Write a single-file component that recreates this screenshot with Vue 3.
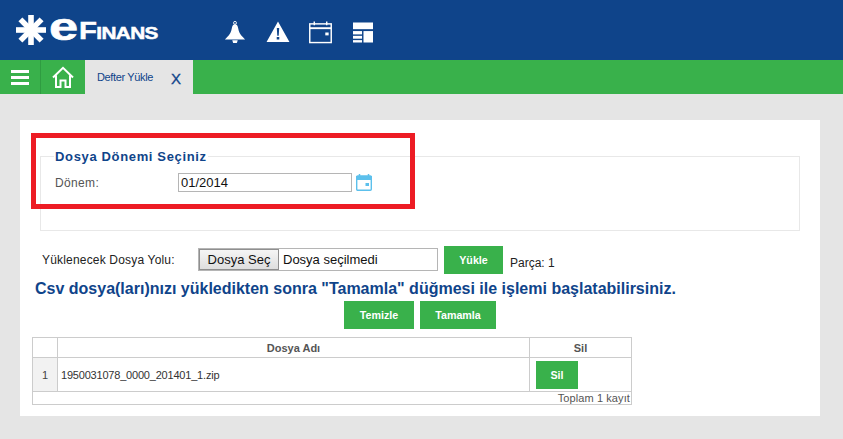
<template>
  <div class="page">
    <header class="topbar">
      <div class="logo">
        <svg class="logo-mark" viewBox="0 0 30 30" width="30" height="30">
          <g fill="#fff">
            <rect v-for="a in spokes" :key="a" x="12.2" y="0" width="5.6" height="30" :transform="`rotate(${a} 15 15)`" />
          </g>
        </svg>
        <span class="logo-e">e</span><span class="logo-name">Finans</span>
      </div>
      <div class="top-icons">
        <svg viewBox="0 0 24 26" width="22" height="25" fill="#fff">
          <circle cx="12" cy="2.5" r="1.6" fill="none" stroke="#fff" stroke-width="1" />
          <path d="M12 4c2 0 3 1.500 3.400 4 .6 4 2 7 5.600 10.500L23 20.500H1l2-2C6.600 15 8 12 8.600 8 9 5.500 10 4 12 4z" />
          <path d="M9 21.500h6l-1 3h-4z" />
        </svg>
        <svg viewBox="0 0 26 24" width="24" height="22" fill="#fff">
          <path fill-rule="evenodd" d="M13 .5 25.500 23H.5zM11.700 7.500l.5 8.500h1.600l.5-8.500zM11.600 17.500v2.800h2.800v-2.800z" />
        </svg>
        <svg class="cal-top" viewBox="0 0 24 24" width="23" height="23" fill="none" stroke="#fff" stroke-width="1.500">
          <rect x=".8" y="3" width="22.400" height="19.500" />
          <path d="M.8 7.500h22.400" stroke-width="2" />
          <path d="M5.500 .5v4M18.500 .5v4" />
          <rect x="17" y="12" width="3.500" height="3" fill="#fff" stroke="none" />
        </svg>
        <svg viewBox="0 0 21 21" width="20" height="21" fill="#fff">
          <rect x="0" y="0" width="21" height="7" />
          <rect x="0" y="9" width="9.500" height="3.500" />
          <rect x="0" y="14" width="9.500" height="3" />
          <rect x="0" y="18.500" width="9.500" height="2.500" />
          <rect x="11" y="9" width="10" height="12" />
        </svg>
      </div>
    </header>

    <nav class="tabbar">
      <button class="bar-btn menu-btn" type="button">
        <span></span><span></span><span></span>
      </button>
      <button class="bar-btn home-btn" type="button">
        <svg viewBox="0 0 22 22" width="22" height="23" fill="none" stroke="#fff" stroke-width="2">
          <path d="M1 11 11 1.300 21 11M4 9v11.500h4.500V14h5v6.500H18V9" />
        </svg>
      </button>
      <div class="tab">
        <span class="tab-title">Defter Yükle</span>
        <span class="tab-close">X</span>
      </div>
    </nav>

    <main class="content">
      <section class="card">
        <div class="highlight"></div>

        <fieldset class="period">
          <legend>Dosya Dönemi Seçiniz</legend>
          <div class="period-row">
            <label class="period-label">Dönem:</label>
            <input class="period-input" type="text" value="01/2014" />
            <svg class="cal" viewBox="0 0 16 17" width="16" height="17">
              <path d="M3.500 0v3M12.500 0v3" stroke="#5cc0ec" stroke-width="1.500" />
              <rect x=".7" y="2" width="14.600" height="14.300" rx="1" fill="#fff" stroke="#5cc0ec" stroke-width="1.400" />
              <rect x="0" y="2" width="16" height="4" fill="#5cc0ec" />
              <rect x="9.500" y="9" width="3.500" height="3" fill="#5cc0ec" />
            </svg>
          </div>
        </fieldset>

        <div class="upload-row">
          <span class="upload-label">Yüklenecek Dosya Yolu:</span>
          <div class="file-box">
            <span class="file-btn">Dosya Seç</span>
            <span class="file-name">Dosya seçilmedi</span>
          </div>
          <button class="green-btn upload-btn" type="button">Yükle</button>
          <span class="part">Parça: 1</span>
        </div>

        <h2 class="notice">Csv dosya(ları)nızı yükledikten sonra "Tamamla" düğmesi ile işlemi başlatabilirsiniz.</h2>

        <div class="actions">
          <button class="green-btn clear-btn" type="button">Temizle</button>
          <button class="green-btn finish-btn" type="button">Tamamla</button>
        </div>

        <table class="files">
          <thead>
            <tr>
              <th class="col-num"></th>
              <th class="col-name">Dosya Adı</th>
              <th class="col-del">Sil</th>
            </tr>
          </thead>
          <tbody>
            <tr v-for="(f, i) in files" :key="f">
              <td class="num">{{ i + 1 }}</td>
              <td class="name">{{ f }}</td>
              <td class="del"><button class="green-btn del-btn" type="button">Sil</button></td>
            </tr>
          </tbody>
          <tfoot>
            <tr>
              <td class="total" colspan="3">Toplam {{ files.length }} kayıt</td>
            </tr>
          </tfoot>
        </table>
      </section>
    </main>
  </div>
</template>

<script setup>
const spokes = [0, 45, 90, 135];
const files = ["1950031078_0000_201401_1.zip"];
</script>

<style>
html,
body {
  margin: 0;
  background: #e5e5e5;
}
</style>

<style scoped>
.page {
  width: 843px;
  height: 439px;
  overflow: hidden;
  background: #e5e5e5;
  font-family: "Liberation Sans", Arial, sans-serif;
}

.topbar {
  height: 60px;
  background: #0f448a;
  display: flex;
  align-items: center;
  box-sizing: border-box;
  padding-left: 16px;
}

.logo {
  width: 208px;
  display: flex;
  align-items: center;
  color: #fff;
  height: 60px;
}

.logo-mark {
  flex: none;
  margin-right: 3px;
}

.logo-e {
  display: inline-block;
  width: 30px;
  font: bold 38px/30px "Liberation Sans", sans-serif;
  -webkit-text-stroke: 0.6px #fff;
  transform: scaleX(1.38);
  transform-origin: left center;
  margin-top: -7px;
}

.logo-name {
  display: inline-block;
  font: bold 24px/30px "Liberation Sans", sans-serif;
  font-variant: small-caps;
  letter-spacing: -0.5px;
  -webkit-text-stroke: 0.5px #fff;
  transform: scaleX(1.22);
  transform-origin: left center;
  margin-top: 1px;
}

.top-icons {
  display: flex;
  align-items: center;
  gap: 20px;
  margin-top: 4px;
}

.cal-top {
  margin-left: -1px;
  margin-right: 1px;
}

.tabbar {
  height: 34px;
  background: #39b14b;
  display: flex;
}

.bar-btn {
  border: 0;
  padding: 0;
  background: none;
  display: flex;
  align-items: center;
  justify-content: center;
}

.menu-btn {
  width: 41px;
  flex-direction: column;
  gap: 3px;
  border-right: 1px solid #2f9c41;
}

.menu-btn span {
  width: 18px;
  height: 3px;
  background: #fff;
}

.home-btn {
  width: 44px;
}

.tab {
  width: 108px;
  background: #e5e5e5;
  display: flex;
  align-items: center;
  padding-left: 12px;
  box-sizing: border-box;
}

.tab-title {
  font-size: 11px;
  letter-spacing: -0.35px;
  color: #0f448a;
  width: 74px;
}

.tab-close {
  font-size: 15px;
  color: #0f448a;
  -webkit-text-stroke: 0.3px #0f448a;
  margin-top: 2px;
}

.content {
  padding: 26px 23px 0 20px;
}

.card {
  position: relative;
  height: 296px;
  box-sizing: border-box;
  background: #fff;
  padding: 28px 20px 0 12px;
}

.highlight {
  position: absolute;
  left: 11px;
  top: 13px;
  width: 384px;
  height: 76px;
  box-sizing: border-box;
  border: 5px solid #ed1c24;
  pointer-events: none;
}

.period {
  margin: 0 0 0 8px;
  padding: 0 14px;
  height: 83px;
  box-sizing: border-box;
  border: 1px solid #e8e8e8;
  min-width: 0;
}

.period legend {
  padding: 0 1px;
  margin-left: -1px;
  font-size: 13px;
  font-weight: bold;
  line-height: 16px;
  color: #0f448a;
  letter-spacing: 0.65px;
  position: relative;
  top: 1px;
}

.period-row {
  display: flex;
  align-items: center;
  margin-top: 9px;
}

.period-label {
  width: 123px;
  font-size: 12px;
  letter-spacing: 0.35px;
  color: #555;
}

.period-input {
  width: 174px;
  height: 19px;
  box-sizing: border-box;
  border: 1px solid #b5b5b5;
  padding: 0 2px;
  font: 13px "Liberation Sans", sans-serif;
  color: #111;
  outline: none;
}

.cal {
  margin-left: 4px;
}

.upload-row {
  display: flex;
  align-items: center;
  height: 28px;
  margin-top: 15px;
  padding-left: 10px;
}

.upload-label {
  width: 156px;
  font-size: 12px;
  letter-spacing: 0.18px;
  color: #222;
}

.file-box {
  width: 240px;
  height: 23px;
  margin-bottom: 2px;
  box-sizing: border-box;
  border: 1px solid #b5b5b5;
  display: flex;
  align-items: center;
  font-size: 13px;
  color: #111;
}

.file-btn {
  width: 80px;
  height: 21px;
  box-sizing: border-box;
  border: 1px solid #8f8f8f;
  background: linear-gradient(#f5f5f5, #dedede);
  display: flex;
  align-items: center;
  justify-content: center;
}

.file-name {
  padding-left: 4px;
}

.green-btn {
  border: 0;
  padding: 0;
  background: #39b14b;
  color: #fff;
  font: bold 10.7px "Liberation Sans", sans-serif;
  height: 28px;
}

.upload-btn {
  width: 59px;
  margin-left: 6px;
}

.part {
  font-size: 12px;
  color: #222;
  margin-left: 7px;
  margin-top: 6px;
}

.notice {
  margin: 6px 0 0 3px;
  font-size: 16px;
  line-height: 18px;
  font-weight: bold;
  color: #0f448a;
  white-space: nowrap;
}

.actions {
  display: flex;
  gap: 6px;
  margin-top: 3px;
  padding-left: 312px;
}

.clear-btn {
  width: 70px;
}

.finish-btn {
  width: 76px;
}

.files {
  margin-top: 8px;
  width: 600px;
  table-layout: fixed;
  border-collapse: collapse;
  font-size: 11px;
  color: #444;
}

.files th,
.files td {
  border: 1px solid #ccc;
  padding: 0;
}

.files th {
  height: 19px;
  font-weight: bold;
  color: #555;
}

.col-num {
  width: 24px;
}

.col-del {
  width: 101px;
}

.num {
  background: #f2f2f2;
  text-align: center;
  color: #444;
}

.name {
  padding-left: 3px !important;
  color: #333;
  letter-spacing: -0.2px;
}

.del {
  height: 33px;
  padding-left: 6px !important;
}

.del-btn {
  display: block;
  width: 42px;
}

.total {
  height: 12px;
  text-align: right;
  padding-right: 1px !important;
  line-height: 11px;
  letter-spacing: 0.1px;
  color: #555;
}
</style>
